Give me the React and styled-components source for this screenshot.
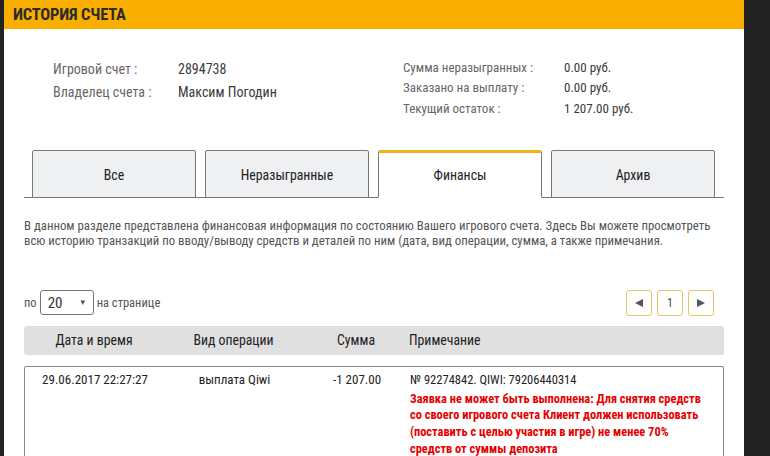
import React from 'react';
import styled, { createGlobalStyle } from 'styled-components';

const GlobalStyle = createGlobalStyle`
  html, body {
    margin: 0;
    padding: 0;
    background: #232323;
    height: 100%;
    overflow: hidden;
  }
  body {
    font-family: Roboto, 'Noto Sans', sans-serif;
    font-stretch: 85%;
  }
`;

const Panel = styled.div`
  margin-left: 4px;
  width: 740px;
  min-height: 456px;
  background: #fff;
`;

const Header = styled.div`
  height: 29px;
  background: #f9ae00;
  display: flex;
  align-items: center;
  padding-left: 9px;

  h1 {
    margin: 0;
    font-size: 16.5px;
    font-weight: 700;
    color: #2b2b2b;
    letter-spacing: -0.2px;
  }
`;

const Info = styled.div`
  display: flex;
  padding: 28px 0 0 49px;
`;

const InfoGroup = styled.div`
  display: grid;
  grid-template-columns: ${(p) => p.$labelWidth}px auto;
  grid-auto-rows: ${(p) => p.$row}px;
  align-items: center;
  width: ${(p) => p.$width}px;
  font-size: ${(p) => p.$size}px;
`;

const Label = styled.span`
  color: #666;
`;

const Value = styled.span`
  color: #3a3a3a;
`;

const Tabs = styled.div`
  display: flex;
  gap: 9px;
  margin: 31px 20px 0 20px;
  padding: 0 9px 0 8px;
  border-bottom: 1px solid #777;
`;

const Tab = styled.div`
  flex: 1;
  height: 48px;
  box-sizing: border-box;
  display: flex;
  align-items: center;
  justify-content: center;
  font-size: 13.8px;
  color: #222;
  margin-bottom: -1px;
  border: 1px solid #777;
  border-bottom: ${(p) => (p.$active ? '1px solid #fff' : '1px solid #777')};
  border-top: ${(p) => (p.$active ? '3px solid #f5b019' : '1px solid #777')};
  border-radius: 2px 2px 0 0;
  background: ${(p) => (p.$active ? '#fff' : '#eff0f2')};
  padding-top: ${(p) => (p.$active ? '0' : '2px')};
`;

const Description = styled.p`
  margin: 20px 20px 0 20px;
  font-size: 12.8px;
  line-height: 15px;
  color: #555;
`;

const Toolbar = styled.div`
  display: flex;
  align-items: center;
  justify-content: space-between;
  margin: 42px 30px 0 20px;
`;

const PerPage = styled.div`
  display: flex;
  align-items: center;
  gap: 3px;
  font-size: 12.5px;
  color: #555;
`;

const Select = styled.div`
  width: 54px;
  height: 25px;
  box-sizing: border-box;
  border: 1px solid #777;
  border-radius: 3px;
  display: flex;
  align-items: center;
  justify-content: space-between;
  padding: 0 6px 0 7px;
  font-size: 15px;
  color: #333;

  span {
    font-size: 8px;
    color: #555;
  }
`;

const Pager = styled.div`
  display: flex;
  gap: 5px;
`;

const PageButton = styled.div`
  width: 26px;
  height: 26px;
  box-sizing: border-box;
  border: 1px solid #e6c46a;
  border-radius: 3px;
  display: flex;
  align-items: center;
  justify-content: center;
  font-size: 13px;
  color: #555;
`;

const Columns = `
  display: grid;
  grid-template-columns: 140px 139px 106px 1fr;
`;

const TableHead = styled.div`
  ${Columns}
  margin: 10px 20px 0 20px;
  height: 29px;
  align-items: center;
  background: #e0e0e0;
  border-radius: 3px;
  font-size: 13.8px;
  color: #222;
`;

const Cell = styled.div`
  text-align: ${(p) => (p.$left ? 'left' : 'center')};
`;

const TableBody = styled.div`
  ${Columns}
  margin: 11px 20px 0 20px;
  border: 1px solid #888;
  border-bottom: none;
  border-radius: 2px 2px 0 0;
  padding-top: 4px;
  font-size: 13px;
  line-height: 17px;
  color: #222;
  min-height: 100px;
`;

const Note = styled.div`
  font-size: 12.5px;
`;

const Warning = styled.div`
  color: #e50000;
  font-weight: 700;
  font-size: 12.4px;
  line-height: 16.7px;
  margin-top: 3px;
`;

const Triangle = ({ dir }) => (
  <svg width="10" height="10" viewBox="0 0 10 10">
    <path
      d={dir === 'left' ? 'M9 1 L1 5 L9 9 Z' : 'M1 1 L9 5 L1 9 Z'}
      fill="#555"
    />
  </svg>
);

export default function App() {
  return (
    <>
      <GlobalStyle />
      <Panel>
        <Header>
          <h1>ИСТОРИЯ СЧЕТА</h1>
        </Header>
        <Info>
          <InfoGroup $labelWidth={125} $row={23} $width={350} $size={14}>
            <Label>Игровой счет :</Label>
            <Value>2894738</Value>
            <Label>Владелец счета :</Label>
            <Value>Максим Погодин</Value>
          </InfoGroup>
          <InfoGroup $labelWidth={161} $row={20.5} $width={300} $size={13}>
            <Label>Сумма неразыгранных :</Label>
            <Value>0.00 руб.</Value>
            <Label>Заказано на выплату :</Label>
            <Value>0.00 руб.</Value>
            <Label>Текущий остаток :</Label>
            <Value>1 207.00 руб.</Value>
          </InfoGroup>
        </Info>
        <Tabs>
          <Tab>Все</Tab>
          <Tab>Неразыгранные</Tab>
          <Tab $active>Финансы</Tab>
          <Tab>Архив</Tab>
        </Tabs>
        <Description>
          В данном разделе представлена финансовая информация по состоянию Вашего игрового счета. Здесь Вы можете просмотреть
          всю историю транзакций по вводу/выводу средств и деталей по ним (дата, вид операции, сумма, а также примечания.
        </Description>
        <Toolbar>
          <PerPage>
            по
            <Select>
              20 <span>▼</span>
            </Select>
            на странице
          </PerPage>
          <Pager>
            <PageButton>
              <Triangle dir="left" />
            </PageButton>
            <PageButton>1</PageButton>
            <PageButton>
              <Triangle dir="right" />
            </PageButton>
          </Pager>
        </Toolbar>
        <TableHead>
          <Cell>Дата и время</Cell>
          <Cell>Вид операции</Cell>
          <Cell>Сумма</Cell>
          <Cell $left>Примечание</Cell>
        </TableHead>
        <TableBody>
          <Cell>29.06.2017 22:27:27</Cell>
          <Cell>выплата Qiwi</Cell>
          <Cell>-1 207.00</Cell>
          <Note>
            № 92274842. QIWI: 79206440314
            <Warning>
              Заявка не может быть выполнена: Для снятия средств
              <br />
              со своего игрового счета Клиент должен использовать
              <br />
              (поставить с целью участия в игре) не менее 70%
              <br />
              средств от суммы депозита
            </Warning>
          </Note>
        </TableBody>
      </Panel>
    </>
  );
}
